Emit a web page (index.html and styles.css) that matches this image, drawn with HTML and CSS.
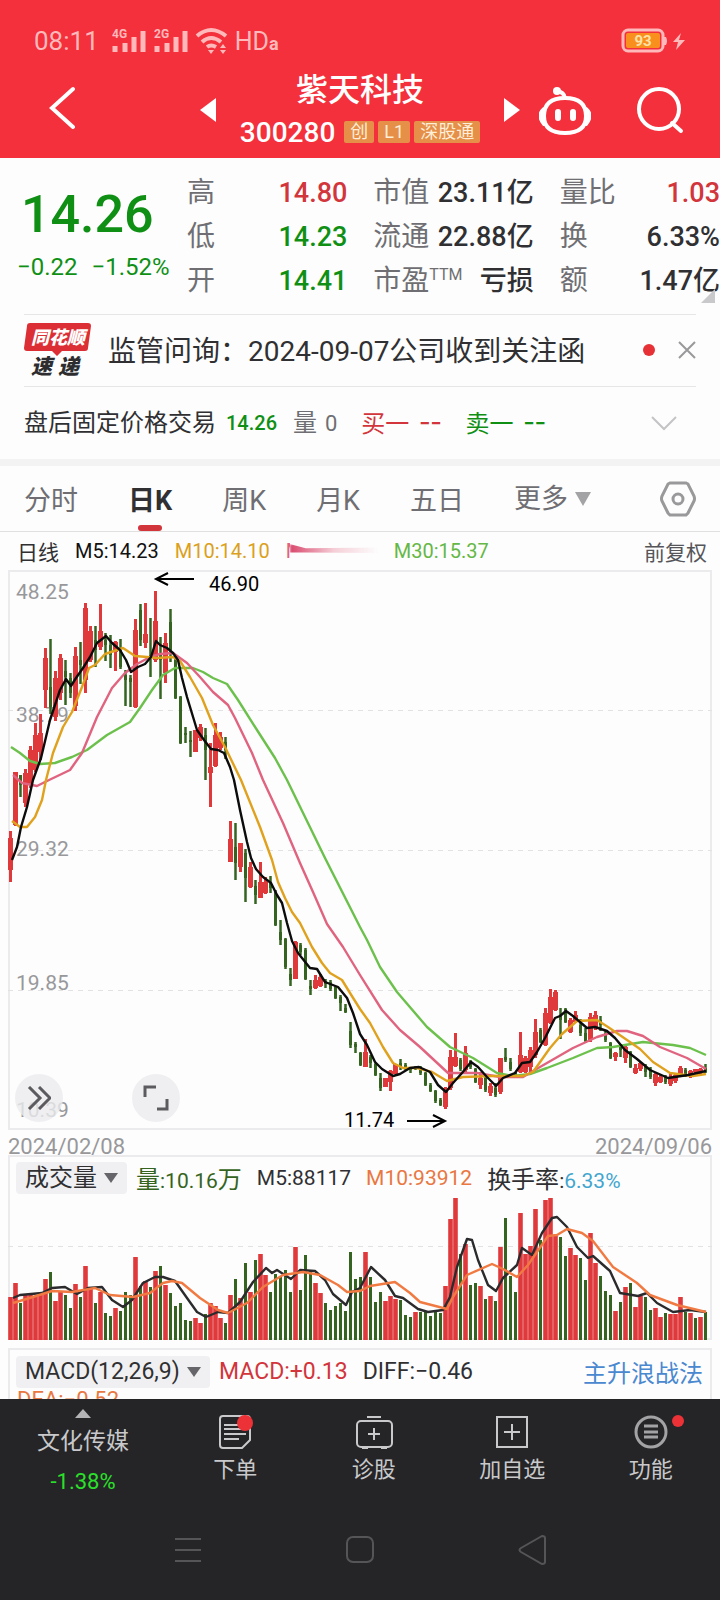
FILE: index.html
```html
<!DOCTYPE html>
<html lang="zh-CN">
<head>
    <meta charset="utf-8" />
    <meta name="viewport" content="width=device-width, initial-scale=1" />
    <title>紫天科技 300280</title>
    <link rel="stylesheet" href="styles.css">
</head>
<body>
    <header class="header">
        <div class="status-bar">
            <span class="clock">08:11</span>
            <svg class="signal" width="36" height="26" viewBox="0 0 36 26">
                <text x="1" y="10">4G</text>
                <path d="M4 18v6M14 15v9M23 9v15M32 3v21" />
            </svg>
            <svg class="signal" width="36" height="26" viewBox="0 0 36 26">
                <text x="1" y="10">2G</text>
                <path d="M4 18v6M14 15v9M23 9v15M32 3v21" />
            </svg>
            <svg class="wifi" width="34" height="28" viewBox="0 0 34 28">
                <path d="M2 9Q16-3 31 9M7 15Q16 7 26 15M12 20Q16 17 21 20" />
                <path class="solid" d="M13 23h6l-3 4zM25 21l3-4 3 4zM25 23h6l-3 4z" />
            </svg>
            <span class="hd">HD<small>a</small></span>
            <svg class="battery" width="66" height="26" viewBox="0 0 66 26">
                <rect class="case" x="2" y="2" width="40" height="21" rx="5" />
                <rect class="charge" x="5" y="5" width="34" height="15" rx="2" />
                <path class="solid" d="M43 9h2q2 4 0 8h-2zM60 5l-8 9h5l-2 8 9-10h-6z" />
                <text x="22" y="18">93</text>
            </svg>
        </div>
        <div class="title-row">
            <div class="title-side">
                <button class="icon-button back" aria-label="返回">
                    <svg width="26" height="44" viewBox="0 0 26 44"><path d="M24 3L3 22l21 19" /></svg>
                </button>
            </div>
            <button class="icon-button" aria-label="上一只">
                <svg width="16" height="24" viewBox="0 0 16 24"><path class="solid" d="M16 0v24L0 12z" /></svg>
            </button>
            <div class="stock">
                <h1>紫天科技</h1>
                <div class="code-row">
                    <span class="code">300280</span>
                    <span class="badge">创</span>
                    <span class="badge">L1</span>
                    <span class="badge">深股通</span>
                </div>
            </div>
            <button class="icon-button" aria-label="下一只">
                <svg width="16" height="24" viewBox="0 0 16 24"><path class="solid" d="M0 0v24l16-12z" /></svg>
            </button>
            <div class="title-side actions">
                <button class="icon-button" aria-label="智能助手">
                    <svg width="52" height="50" viewBox="0 0 52 50">
                        <path d="M26 13c-15 0-21 7-21 18s7 17 21 17 21-6 21-17-6-18-21-18z" />
                        <path d="M5 24q-7 6 0 15M47 24q7 6 0 15M26 13q-1-6-8-7" />
                        <circle class="solid" cx="18" cy="6" r="4" />
                        <path class="eyes" d="M19 27v6M34 27v6" />
                    </svg>
                </button>
                <button class="icon-button" aria-label="搜索">
                    <svg width="48" height="48" viewBox="0 0 48 48">
                        <circle cx="23" cy="23" r="20" /><path d="M36 37l9 8" />
                    </svg>
                </button>
            </div>
        </div>
    </header>

    <main>
        <section class="quote">
            <div class="price">
                <strong>14.26</strong>
                <span>−0.22</span><span>−1.52%</span>
            </div>
            <dl>
                <div><dt>高</dt><dd class="red">14.80</dd></div>
                <div><dt>低</dt><dd class="green">14.23</dd></div>
                <div><dt>开</dt><dd class="green">14.41</dd></div>
            </dl>
            <dl>
                <div><dt>市值</dt><dd>23.11亿</dd></div>
                <div><dt>流通</dt><dd>22.88亿</dd></div>
                <div><dt>市盈<sup>TTM</sup></dt><dd>亏损</dd></div>
            </dl>
            <dl>
                <div><dt>量比</dt><dd class="red">1.03</dd></div>
                <div><dt>换</dt><dd>6.33%</dd></div>
                <div><dt>额</dt><dd>1.47亿</dd></div>
            </dl>
            <i class="corner"></i>
        </section>

        <section class="news">
            <svg width="68" height="54" viewBox="0 0 68 54">
                <path class="bubble" d="M6 0h58q3 0 3 3l-3 22q0 3-3 3H38l-5 5-5-5H3q-3 0-3-3L3 3q0-3 3-3z" />
                <text class="logo-top" x="7" y="21">同花顺</text>
                <text class="logo-bottom" x="7" y="51">速</text>
                <text class="logo-bottom" x="34" y="51">递</text>
            </svg>
            <a href="#">监管问询：2024-09-07公司收到关注函</a>
            <i class="dot"></i>
            <button class="icon-button" aria-label="关闭">
                <svg width="18" height="18" viewBox="0 0 18 18"><path d="M1 1l16 16M17 1L1 17" /></svg>
            </button>
        </section>

        <section class="after-hours">
            <span>盘后固定价格交易</span>
            <b class="green">14.26</b>
            <span class="muted">量 <small>0</small></span>
            <span class="red">买一<em>--</em></span>
            <span class="green">卖一<em>--</em></span>
            <button class="icon-button" aria-label="展开">
                <svg width="26" height="15" viewBox="0 0 26 15"><path d="M1 1l12 12L25 1" /></svg>
            </button>
        </section>

        <nav class="tabs">
            <button>分时</button>
            <button class="active">日K</button>
            <button>周K</button>
            <button>月K</button>
            <button>五日</button>
            <label class="dropdown more">
                <select aria-label="更多周期"><option>更多</option></select>
            </label>
            <button class="settings" aria-label="设置">
                <svg width="36" height="36" viewBox="0 0 36 36">
                    <path d="M10 2h16l2 1 6 12q1 3 0 5l-6 12-2 2H10l-2-2-6-12q-1-2 0-5L8 3z" />
                    <circle cx="18" cy="18" r="5" />
                </svg>
            </button>
        </nav>

        <div class="averages">
            <span class="cjk">日线</span>
            <span class="ma5">M5:14.23</span>
            <span class="ma10">M10:14.10</span>
            <span class="ma20"><i>M</i></span>
            <span class="ma30">M30:15.37</span>
            <span class="cjk adjust">前复权</span>
        </div>

        <section class="panel kline">
            <svg id="kline" viewBox="0 0 704 560"></svg>
            <div class="chart-tools">
                <button aria-label="快进">
                    <svg width="24" height="24" viewBox="0 0 24 24"><path d="M2 1l11 11L2 23M12 1l11 11-11 11" /></svg>
                </button>
                <button aria-label="全屏">
                    <svg width="26" height="26" viewBox="0 0 26 26"><path d="M2 12V2h11M24 14v10H14" /></svg>
                </button>
            </div>
        </section>
        <div class="dates"><time>2024/02/08</time><time>2024/09/06</time></div>

        <section class="panel volume">
            <div class="indicator">
                <label class="dropdown chip">
                    <select aria-label="副图指标"><option>成交量</option></select>
                </label>
                <span class="vol"><b>量</b>:10.16<b>万</b></span>
                <span>M5:88117</span>
                <span class="vol10">M10:93912</span>
                <span><b>换手率</b>:<span class="rate">6.33%</span></span>
            </div>
            <svg id="volume" viewBox="0 0 704 144"></svg>
        </section>

        <section class="panel macd">
            <div class="indicator">
                <label class="dropdown chip">
                    <select aria-label="指标参数"><option>MACD(12,26,9)</option></select>
                </label>
                <span class="red">MACD:+0.13</span>
                <span>DIFF:−0.46</span>
                <a href="#">主升浪战法</a>
            </div>
            <span class="dea">DEA:−0.52</span>
        </section>
    </main>

    <footer class="footer">
        <nav class="toolbar">
            <button class="sector">
                <i class="up"></i>
                <span>文化传媒</span>
                <span class="change">-1.38%</span>
            </button>
            <button>
                <svg width="36" height="36" viewBox="0 0 36 36">
                    <path d="M6 2h24q3 0 3 3v21l-8 8H6q-3 0-3-3V5q0-3 3-3z" />
                    <path d="M7 11h16M7 15h22M7 20h22M7 25h15" />
                    <circle class="alert" cx="28" cy="9" r="8" />
                </svg>
                <span>下单</span>
            </button>
            <button>
                <svg width="38" height="36" viewBox="0 0 38 36">
                    <rect x="2" y="7" width="35" height="26" rx="4" />
                    <path d="M12 3h14M7 34h6M26 34h6M13 20h12M19 14v12" />
                </svg>
                <span>诊股</span>
            </button>
            <button>
                <svg width="36" height="36" viewBox="0 0 36 36">
                    <rect x="3" y="3" width="30" height="30" /><path d="M10 18h16M18 10v16" />
                </svg>
                <span>加自选</span>
            </button>
            <button>
                <svg class="menu" width="36" height="36" viewBox="0 0 36 36">
                    <circle cx="18" cy="18" r="15" /><path d="M11 12h14M11 18h14M11 23h14" />
                </svg>
                <i class="alert-dot"></i>
                <span>功能</span>
            </button>
        </nav>
        <nav class="system-nav">
            <button aria-label="最近任务">
                <svg width="28" height="30" viewBox="0 0 28 30"><path d="M1 4h26M1 15h26M1 26h26" /></svg>
            </button>
            <button aria-label="主屏幕">
                <svg width="28" height="30" viewBox="0 0 28 30"><rect x="1" y="2" width="26" height="25" rx="6" /></svg>
            </button>
            <button aria-label="返回">
                <svg width="28" height="30" viewBox="0 0 28 30"><path d="M24 1L3 13q-3 2 0 4l21 12q3 0 3-2V3q0-2-3-2z" /></svg>
            </button>
        </nav>
    </footer>

    <script src="chart.js"></script>
</body>
</html>
```

FILE: styles.css
```css
* {
    box-sizing: border-box;
}

body {
    margin: 0;
    min-height: 100vh;
    display: flex;
    flex-direction: column;
    overflow-x: hidden;
    background: #fdfdfd;
    color: #303033;
    font-family: Roboto, 'Noto Sans CJK SC', sans-serif;
}

main {
    flex: 1;
}

button,
select {
    margin: 0;
    padding: 0;
    border: none;
    background: none;
    color: inherit;
    font: inherit;
    cursor: pointer;
}

svg {
    display: block;
    fill: none;
    stroke: currentColor;
}

svg text {
    stroke: none;
    fill: currentColor;
}

.solid {
    fill: currentColor;
    stroke: none;
}

a {
    color: inherit;
    text-decoration: none;
}

.red {
    color: #d2353b;
}

.green {
    color: #0f9015;
}

/* header */

.header {
    background: #f3303b;
    color: #fff;
}

.status-bar {
    display: flex;
    align-items: center;
    gap: 6px;
    height: 76px;
    padding: 6px 33px 0 34px;
    color: #ffb9bb;
}

.clock {
    margin-right: 6px;
    font-size: 26px;
}

.signal {
    stroke-width: 5;
}

.signal text {
    font-size: 12px;
    font-weight: 700;
}

.wifi {
    stroke-width: 4;
}

.hd {
    font-size: 25px;
}

.hd small {
    font-size: 18px;
    font-weight: 700;
}

.battery {
    margin-left: auto;
}

.battery .case {
    stroke-width: 3;
}

.battery .charge {
    fill: #f9901e;
    stroke: none;
}

.battery text {
    font-size: 15px;
    font-weight: 700;
    text-anchor: middle;
    fill: #ffe3a8;
}

.title-row {
    display: grid;
    grid-template-columns: 200px 16px 1fr 16px 200px;
    grid-template-rows: 68px;
    align-items: center;
    padding-bottom: 14px;
}

.icon-button {
    flex: none;
}

.back {
    margin-left: 49px;
}

.title-row svg {
    stroke-width: 4;
    stroke-linecap: round;
}

.actions {
    display: flex;
    align-items: center;
    gap: 45px;
    padding-left: 19px;
}

.title-row .eyes {
    stroke-width: 6;
}

.stock {
    text-align: center;
}

.stock h1 {
    margin: 0;
    font-size: 32px;
    line-height: 44px;
    font-weight: 500;
}

.code-row {
    display: flex;
    justify-content: center;
    align-items: center;
    gap: 4px;
    height: 40px;
}

.code {
    margin-right: 5px;
    font-size: 28px;
    font-weight: 500;
}

.badge {
    padding: 0 6px;
    border-radius: 2px;
    background: #e58f49;
    color: #ffeed8;
    font-size: 18px;
    line-height: 22px;
}

/* quote */

.quote {
    position: relative;
    display: flex;
    gap: 26px;
    padding: 13px 0 11px;
}

.price {
    width: 161px;
    padding: 12px 0 0 17px;
    color: #0f9015;
    white-space: nowrap;
}

.price strong {
    display: block;
    margin-left: 4px;
    font-size: 52px;
    line-height: 64px;
    font-weight: 500;
}

.price span {
    margin-right: 14px;
    font-size: 24px;
    line-height: 40px;
}

.price span:last-child {
    margin: 0;
}

.quote dl {
    flex: 1 1 0;
    min-width: 0;
    margin: 0;
    line-height: 44px;
    white-space: nowrap;
}

.quote dl div {
    display: flex;
    justify-content: space-between;
    height: 44px;
}

.quote dt {
    font-size: 28px;
    color: #6f6f73;
}

.quote sup {
    font-size: 16px;
    line-height: 1;
}

.quote dd {
    margin: 0;
    font-size: 27px;
    font-weight: 500;
}

.corner {
    position: absolute;
    right: 5px;
    bottom: 11px;
    border: 7px solid;
    border-color: transparent #c9c9cc #c9c9cc transparent;
}

/* news */

.news {
    display: flex;
    align-items: center;
    height: 73px;
    margin: 0 24px;
    padding-bottom: 2px;
    border: solid #e6e6e8;
    border-width: 1px 0;
    font-size: 28px;
    white-space: nowrap;
}

.news > svg {
    overflow: visible;
}

.bubble {
    fill: #dc2f35;
    stroke: none;
}

.logo-top,
.logo-bottom {
    font-weight: 900;
    font-style: italic;
}

.logo-top {
    font-size: 18px;
    fill: #fff;
}

.logo-bottom {
    font-size: 21px;
    fill: #2d2d30;
}

.news a {
    margin-left: 16px;
    padding-bottom: 2px;
}

.dot {
    width: 12px;
    height: 12px;
    margin: 0 23px 0 auto;
    border-radius: 50%;
    background: #e63236;
}

.news .icon-button {
    color: #99999c;
    stroke-width: 2;
}

/* after hours */

.after-hours {
    display: flex;
    align-items: center;
    height: 79px;
    padding: 0 43px 0 24px;
    border-bottom: 7px solid #f3f3f4;
    font-size: 24px;
    line-height: 32px;
    white-space: nowrap;
}

.after-hours b {
    margin: 0 16px 0 10px;
    font-size: 20px;
    font-weight: 500;
}

.after-hours small {
    margin-left: 2px;
    font-size: 22px;
}

.after-hours .red,
.after-hours .green:not(b) {
    margin-left: 24px;
}

.after-hours em {
    margin-left: 10px;
    font-family: 'Noto Sans CJK SC', sans-serif;
    font-style: normal;
    font-size: 32px;
    line-height: 24px;
}

.muted {
    color: #6f6f73;
}

.after-hours .icon-button {
    margin-left: auto;
    color: #c4c4c6;
    stroke-width: 2;
}

/* tabs */

.tabs {
    display: flex;
    align-items: center;
    gap: 50px;
    height: 66px;
    padding: 0 24px;
    border-bottom: 1px solid #e0e0e1;
    color: #6f6f73;
    font-size: 27px;
    white-space: nowrap;
}

.tabs .active {
    position: relative;
    color: #303033;
    font-weight: 700;
}

.tabs .active::after {
    content: "";
    position: absolute;
    left: 50%;
    bottom: -13px;
    width: 24px;
    height: 6px;
    margin-left: -12px;
    border-radius: 3px;
    background: #d2353b;
}

.dropdown {
    display: flex;
    align-items: center;
    gap: 7px;
}

.dropdown select {
    appearance: none;
    outline: none;
}

.dropdown::after {
    content: "";
    border: solid transparent;
    border-width: 10px 7px 0;
    border-top-color: #66666a;
}

.more::after {
    border-width: 14px 8px 0;
    border-top-color: #a3a3a5;
}

.settings {
    margin-left: auto;
    color: #99999b;
    stroke-width: 3;
}

/* moving averages */

.averages {
    display: flex;
    align-items: center;
    gap: 16px;
    height: 38px;
    padding: 0 13px 0 17px;
    font-size: 20px;
    white-space: nowrap;
}

.cjk {
    font-size: 21px;
}

.ma5 {
    color: #111;
}

.ma10 {
    color: #dba01c;
}

.ma20 {
    display: flex;
    align-items: center;
    width: 92px;
    color: #e0637f;
}

.ma20 i {
    width: 4px;
    overflow: hidden;
    font-style: normal;
}

.ma20::after {
    content: "";
    flex: 1;
    height: 14px;
    background: linear-gradient(to right, #d9486c, #f5cfd8 50%, transparent);
    clip-path: polygon(0 0, 18% 30%, 100% 25%, 100% 65%, 18% 60%, 0 60%);
    filter: blur(1px);
}

.ma30 {
    color: #65b846;
}

.adjust {
    margin-left: auto;
    color: #55555a;
}

/* charts */

.panel {
    position: relative;
    margin: 0 8px;
    border: 2px solid #ebebed;
}

.panel > svg {
    width: calc(100% + 4px);
    margin: -2px;
    overflow: visible;
}

.grid-line {
    stroke: #e2e2e4;
    stroke-width: 1;
    stroke-dasharray: 5 5;
}

.rise {
    stroke: #e0393c;
}

.fall {
    stroke: #356421;
}

.axis {
    font-size: 21px;
    fill: #98989b;
}

.note {
    font-size: 20px;
    fill: #000;
}

.arrow {
    stroke: #000;
    stroke-width: 2;
}

.line {
    stroke-width: 2.4;
    stroke-linejoin: round;
}

.line-black { stroke: #0c0c0c; }
.line-orange { stroke: #e0a11d; }
.line-pink { stroke: #e0637f; }
.line-green { stroke: #6cc04c; }
.line-vol5 { stroke: #2b2b2d; }
.line-vol10 { stroke: #f07a42; }

.chart-tools {
    position: absolute;
    left: 5px;
    bottom: 6px;
    display: flex;
    gap: 69px;
}

.chart-tools button {
    display: flex;
    align-items: center;
    justify-content: center;
    width: 48px;
    height: 48px;
    border-radius: 50%;
    background: rgba(235, 235, 238, 0.8);
    color: #5c5c60;
    stroke-width: 3;
}

.dates {
    display: flex;
    justify-content: space-between;
    height: 25px;
    padding: 0 8px;
    color: #98989b;
    font-size: 22px;
    line-height: 33px;
}

.indicator {
    display: flex;
    align-items: center;
    gap: 15px;
    font-size: 21px;
    white-space: nowrap;
}

.indicator b {
    font-size: 24px;
    font-weight: 400;
}

.chip {
    height: 32px;
    margin: 0 -6px 0 6px;
    padding: 0 9px;
    border-radius: 4px;
    background: #f0f0f2;
    font-size: 24px;
}

.volume .indicator {
    height: 39px;
    padding-top: 2px;
}

.volume > svg {
    margin-top: 0;
}

.vol {
    color: #356421;
}

.vol10 {
    color: #e97742;
}

.rate {
    color: #42a5cf;
}

.macd {
    height: 51px;
    margin-top: 8px;
    border-bottom: none;
    overflow: hidden;
}

.macd .indicator {
    height: 43px;
    font-size: 23px;
}

.macd .chip {
    font-size: 23px;
}

.macd a {
    margin: 0 7px 0 auto;
    color: #4a88d0;
    font-size: 24px;
}

.dea {
    display: block;
    margin: -6px 0 0 7px;
    color: #e97742;
    font-size: 22px;
}

/* footer */

.footer {
    background: #252527;
    color: #c9c9cb;
}

.toolbar {
    display: grid;
    grid-template-columns: 166px repeat(4, 1fr);
    height: 101px;
    padding-top: 15px;
    font-size: 22px;
    line-height: 32px;
    stroke-width: 2;
}

.toolbar button {
    position: relative;
    display: flex;
    flex-direction: column;
    align-items: center;
    gap: 4px;
}

.toolbar .sector {
    gap: 8px;
    margin-top: -5px;
    font-size: 23px;
}

.up {
    border: solid transparent;
    border-width: 0 8px 9px;
    border-bottom-color: #b4b4b6;
}

.sector .change {
    color: #2be02b;
    font-size: 22px;
}

.alert {
    fill: #ec3237;
    stroke: none;
}

.menu {
    color: #a3a3a5;
    stroke-width: 3;
}

.alert-dot {
    position: absolute;
    top: 1px;
    left: 50%;
    width: 12px;
    height: 12px;
    margin-left: 21px;
    border-radius: 50%;
    background: #ec3237;
}

.system-nav {
    display: grid;
    grid-template-columns: repeat(3, 1fr);
    justify-items: center;
    align-items: center;
    height: 100px;
    padding: 0 102px;
    color: #555558;
    stroke-width: 2;
}
```

FILE: chart.js
```js
// one entry per trading day: direction, high, low, body top, body bottom
const candles = `
r261,312,268,300 r202,256,202,255 g205,227,205,215 r199,237,203,233 r176,218,180,215
r153,202,165,200 r144,190,163,182 r78,138,88,120 g69,144,117,137 r101,151,108,147
r84,130,88,123 g90,135,101,107 g103,128,108,123 r77,141,86,136 g72,114,90,95
r33,123,38,110 r56,92,61,90 g56,97,70,80 r34,80,61,77 g63,91,70,75
g65,98,75,85 r71,101,72,82 g69,99,78,97 g100,136,105,110 g105,137,108,112
r49,138,60,137 g34,76,40,70 r33,78,64,73 g48,107,85,88 r21,92,51,90
g67,129,85,90 r63,113,73,103 g39,92,52,80 g85,129,90,128 g126,174,127,173
g157,173,163,165 g161,187,170,172 r160,182,160,182 r154,171,157,168 g158,210,165,180
r173,237,197,203 r153,197,165,196 r162,180,167,178 g167,189,172,180 r251,292,269,292
g253,310,277,293 r273,302,273,297 g279,332,283,308 r292,318,297,317 g310,334,316,325
r292,328,312,328 r307,324,312,323 g306,323,313,318 g320,356,322,355 g350,375,362,370
g368,399,369,397 g398,416,404,410 r371,409,372,409 g373,385,375,382 g378,410,380,409
g410,425,416,419 r405,419,410,418 r404,417,407,416 g409,418,411,414 g410,421,412,419
g416,429,417,428 g425,441,427,433 g434,443,438,442 g452,478,461,475 g472,483,474,477
g482,496,483,495 r469,497,482,497 g485,498,487,493 g493,506,494,505 g503,521,508,518
r508,517,508,517 r500,521,501,512 r494,504,494,504 g489,500,493,497 g493,500,495,498
g497,503,498,500 g496,500,497,499 g496,505,498,503 g502,516,503,515 g513,522,515,521
g520,533,521,531 g528,536,530,535 r517,539,518,537 r480,520,487,518 r463,497,487,496
g488,501,490,499 r476,502,483,500 g490,499,491,497 g498,513,499,512 r502,519,508,515
g507,522,508,520 r513,526,516,523 g513,527,518,525 r488,524,488,522 g478,492,487,490
g488,501,492,499 g502,505,503,505 r462,503,485,502 r486,503,488,502 r477,502,480,497
r449,488,462,485 g458,473,460,472 r438,476,443,475 r419,454,427,453 r420,441,422,440
g438,469,445,450 g438,453,439,452 r448,463,450,462 r441,453,445,452 g449,466,455,463
g458,473,463,471 r443,472,447,470 r441,460,445,458 g446,461,450,455 g460,472,463,470
g472,489,473,488 r482,491,483,487 g474,487,476,480 r475,493,477,488 g481,498,482,497
r494,504,498,503 r492,501,493,499 g494,507,496,502 g497,509,500,507 r503,516,504,513
r505,513,507,512 g505,514,507,512 r504,516,507,514 r503,513,505,511 r496,507,498,506
g498,507,500,504 r500,508,501,506 r499,503,499,502 r498,504,499,503 g494,503,498,502
`;

const volumes = `
r43 r57 g37 r46 r46 r44 r45 r61 g68 r39 r48 g45 g32 r56 g43 r74 r51 g37 r48 g27
g24 r32 g29 g48 g45 r83 g54 r59 g53 r69 g74 r55 g47 g34 g37 g20 g19 r22 r17 g26
r37 r34 r22 g17 r45 g61 r42 g77 r48 g80 r86 r65 g48 g66 g64 g70 g48 r93 g50 g85
g69 r57 r47 g37 g30 g34 g37 g29 g88 g61 g63 r88 g63 g38 g48 r39 r44 r41 g40 g25
g23 r28 g28 g28 g24 g28 g27 r54 r121 r142 g86 r96 g55 g57 r54 g41 r44 g39 r93 g122
g64 g48 r127 r86 r94 r131 g100 r140 r142 r104 g103 g84 r92 r85 g82 g60 r107 r77 g64 g49
g45 r29 g38 r53 g57 r33 r44 g43 g30 r32 r23 g27 r26 r26 r43 g28 r27 g22 r23 g28
`;

const averages = {
    green: '3,177 12,183 22,191 32,194 47,193 64,187 79,180 99,165 122,152 132,138 144,120 155,105 167,98 185,98 195,102 205,108 219,114 230,130 249,160 267,188 279,210 317,288 352,357 359,370 372,397 389,422 419,457 442,477 465,488 489,503 505,506 522,504 539,498 565,488 589,478 605,477 635,472 665,475 682,478 698,485',
    pink: '5,205 14,213 29,216 39,211 62,200 74,183 89,147 104,118 117,103 129,94 142,87 152,84 165,83 179,93 192,107 205,122 220,135 227,148 244,183 255,210 275,253 292,293 305,322 319,354 335,377 352,405 374,440 392,460 412,477 440,503 469,503 492,507 515,507 532,497 565,478 589,467 609,461 619,461 635,466 652,477 679,488 698,499',
    orange: '4,251 12,257 19,257 27,247 34,230 38,210 45,183 55,157 64,142 74,117 81,98 87,95 97,84 115,78 127,86 139,87 149,88 165,87 172,91 182,107 194,128 205,155 217,177 233,210 252,257 264,290 270,312 277,328 284,342 292,353 304,377 314,393 322,403 334,410 342,423 352,439 362,453 375,477 385,493 395,498 409,498 424,502 439,511 455,507 485,506 515,506 525,502 542,478 554,464 569,451 589,450 600,457 619,470 632,479 645,492 662,503 685,506 698,504',
    black: '4,290 9,277 13,257 19,237 25,210 33,188 38,167 42,150 47,135 52,120 58,109 63,116 68,108 75,98 82,87 89,73 98,66 104,73 112,80 118,90 123,102 130,97 137,94 143,87 148,71 152,75 159,78 165,83 170,90 174,108 179,127 189,160 196,170 203,179 210,180 216,183 222,197 226,210 232,240 239,272 243,288 248,299 255,307 263,313 269,325 274,333 279,353 284,371 290,383 302,398 309,399 317,412 330,417 339,428 345,443 352,464 359,475 367,492 374,499 385,506 392,504 402,498 411,497 422,502 430,515 438,522 445,513 454,503 463,492 470,497 479,507 488,516 495,508 507,503 514,493 522,492 529,482 537,468 547,448 552,446 558,441 565,446 579,458 587,457 599,461 607,468 617,480 629,489 642,500 660,508 680,505 698,501'
};

const volumeAverages = {
    vol5: '5,102 12,99 34,97 44,92 57,91 69,98 80,92 94,91 104,104 115,111 124,104 135,87 147,81 155,81 167,85 179,102 189,116 198,121 210,116 220,117 232,106 245,86 258,72 264,77 269,74 283,83 292,74 307,75 317,84 325,98 338,109 344,96 352,92 363,71 377,84 387,100 395,102 410,113 420,116 435,114 442,101 449,71 459,43 464,44 470,64 480,89 488,95 495,82 509,69 514,52 524,59 534,37 544,22 549,21 559,31 569,51 580,62 585,60 602,75 612,97 630,100 639,97 649,107 665,116 682,114 698,116',
    vol10: '5,107 25,101 44,95 64,96 87,92 102,99 125,101 142,97 155,87 164,85 174,87 192,102 210,114 220,117 239,107 255,91 275,79 295,76 312,79 330,89 339,96 352,95 362,90 387,86 402,97 412,106 439,113 445,101 459,79 484,68 495,73 509,81 520,69 540,40 549,39 559,33 574,37 585,45 605,71 629,87 642,99 669,109 698,116'
};

const STEP = 5;

function bar(x, y1, y2, width, type) {
    return `<path class="${type === 'r' ? 'rise' : 'fall'}" stroke-width="${width}" d="M${x} ${y1}V${y2}"/>`;
}

function gridLine(y) {
    return `<path class="grid-line" d="M0 ${y}H704"/>`;
}

function lines(set) {
    return Object.keys(set)
        .map(name => `<polyline class="line line-${name}" points="${set[name]}"/>`)
        .join('');
}

function drawKline() {
    let out = [140.5, 280.5, 420.5].map(gridLine).join('');

    [['48.25', 29], ['38.79', 152], ['29.32', 286], ['19.85', 420], ['10.39', 547]].forEach(([label, y]) => {
        out += `<text class="axis" x="8" y="${y}">${label}</text>`;
    });

    candles.trim().split(/\s+/).forEach((item, i) => {
        const type = item[0];
        const [high, low, top, bottom] = item.slice(1).split(',');
        const x = 2.5 + i * STEP;
        out += bar(x, high, low, type === 'r' ? 3 : 2.5, type);
        out += bar(x, top, bottom, type === 'r' ? 5 : 3, type);
    });

    out += lines(averages);
    out += '<path class="arrow" d="M186 9H148M160 3l-12 6 12 6M399 551h38M425 545l12 6-12 6"/>';
    out += '<text class="note" x="201" y="21">46.90</text>';
    out += '<text class="note" x="336" y="557">11.74</text>';
    document.getElementById('kline').innerHTML = out;
}

function drawVolume() {
    let out = gridLine(50.5);

    volumes.trim().split(/\s+/).forEach((item, i) => {
        const type = item[0];
        out += bar(2.5 + i * STEP, 144 - item.slice(1), 144, type === 'r' ? 4.6 : 3, type);
    });

    document.getElementById('volume').innerHTML = out + lines(volumeAverages);
}

drawKline();
drawVolume();
```
